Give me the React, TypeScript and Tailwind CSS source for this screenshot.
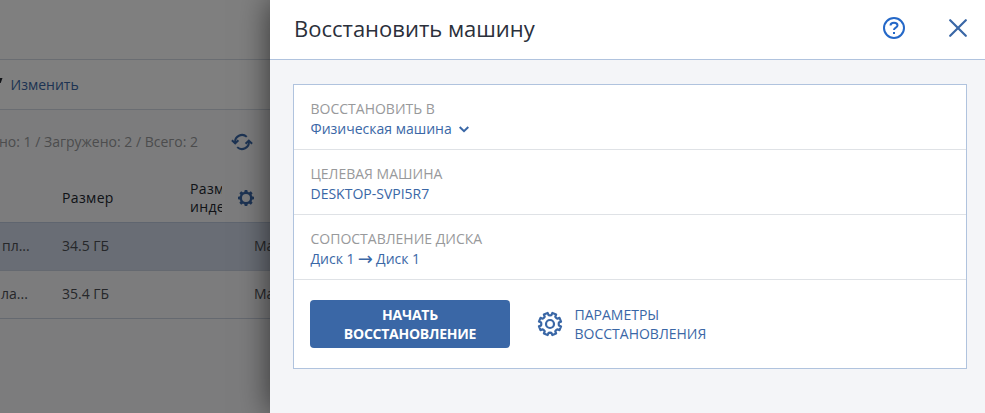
import type { ReactNode } from "react";

const rows = [
  { name: "пл...", size: "34.5 ГБ", type: "Ма", selected: true },
  { name: "ла...", size: "35.4 ГБ", type: "Ма", selected: false },
];

function gearPath(cx: number, cy: number, teeth: number, inner: number, outer: number, base = 0.27, tip = 0.19) {
  const step = (Math.PI * 2) / teeth;
  const at = (r: number, a: number) =>
    `${(cx + r * Math.sin(a)).toFixed(2)} ${(cy - r * Math.cos(a)).toFixed(2)}`;
  const points: string[] = [];
  for (let i = 0; i < teeth; i++) {
    const a = i * step;
    points.push(
      at(inner, a - step * base),
      at(outer, a - step * tip),
      at(outer, a + step * tip),
      at(inner, a + step * base),
      at(inner - 0.3, a + step * 0.5)
    );
  }
  return `M${points.join("L")}Z`;
}

function RefreshIcon() {
  return (
    <svg width="22" height="18" viewBox="0 0 22 18" fill="none" stroke="currentColor" strokeWidth="2" className="shrink-0">
      <path d="M4.2 9.8A6.9 6.9 0 0 1 15.8 3.9" />
      <path d="M17.8 8.2A6.9 6.9 0 0 1 6.2 14.1" />
      <path d="M.9 7.2l3.3 3.2L7.4 7.2" />
      <path d="M14.6 10.8L17.8 7.6l3.3 3.2" />
    </svg>
  );
}

function TableGearIcon() {
  return (
    <svg width="16" height="16" viewBox="0 0 16 16" fill="currentColor" fillRule="evenodd" className="shrink-0">
      <path d={`${gearPath(8, 8, 8, 6.6, 8.2, 0.3, 0.2)}M8 4a4 4 0 1 0 0 8a4 4 0 0 0 0-8Z`} />
    </svg>
  );
}

function OptionsGearIcon() {
  return (
    <svg width="26" height="26" viewBox="0 0 26 26" fill="none" stroke="currentColor" strokeWidth="2.2" strokeLinejoin="round" className="shrink-0">
      <path transform="rotate(22.5 13 13)" d={gearPath(13, 13, 8, 9, 11.3, 0.3, 0.23)} />
      <circle cx="13" cy="13" r="4" />
    </svg>
  );
}

function Section({ label, children }: { label: string; children: ReactNode }) {
  return (
    <div className="h-[65px] border-b border-[#dfe2e6] pt-[14px] pl-[16.5px] text-sm leading-5">
      <div className="text-[#98999b]">{label}</div>
      <button className="flex h-5 items-center whitespace-pre text-[#3a67a6]">{children}</button>
    </div>
  );
}

function BackupList() {
  return (
    <div className="relative h-full w-[270px] shrink-0 overflow-hidden bg-[#f8f9fb] text-sm whitespace-nowrap">
      <div className="h-[60px] border-b border-[#d5dbe5] bg-white" />
      <div className="flex h-[50px] items-center border-b border-[#d5dbe5] bg-white text-[#3a67a6]">
        <span className="w-[10.5px] text-[#22262f]">
          <svg width="3" height="8" viewBox="0 0 3 8" fill="currentColor" className="-mt-1.5">
            <path d="M0 0h2.500L.700 5H0V1.500Z" />
          </svg>
        </span>
        <span>Изменить</span>
      </div>
      <div className="flex h-16 items-center justify-between pr-[17px]">
        <span className="-ml-px text-[#98999b]">но: 1 / Загружено: 2 / Всего: 2</span>
        <span className="text-[#3a67a6]"><RefreshIcon /></span>
      </div>
      <div className="flex h-[49px] items-center border-b border-[#bfcade] font-medium tracking-[0.35px] text-[#22262f]">
        <span className="w-[62px] shrink-0" />
        <span className="w-32 shrink-0">Размер</span>
        <span className="w-8 shrink-0 overflow-hidden leading-[18px]">Размер<br />индекса</span>
        <span className="ml-4 text-[#3a67a6]"><TableGearIcon /></span>
      </div>
      {rows.map((row) => (
        <div
          key={row.size}
          className={`flex h-12 items-center border-b border-[#cbd3e0] pb-0.5 text-[#4d4f54] ${row.selected ? "bg-[#d2dbea]" : ""}`}
        >
          <span className={`w-[62px] shrink-0 ${row.selected ? "pl-0.5" : "pl-px"}`}>{row.name}</span>
          <span className="w-48 shrink-0">{row.size}</span>
          <span>{row.type}</span>
        </div>
      ))}
      <div className="absolute inset-0 bg-black/50" />
    </div>
  );
}

function RecoverPanel() {
  return (
    <div className="relative flex h-full flex-1 flex-col bg-[#f4f5f8] shadow-[0_0_30px_rgba(0,0,0,0.6)]">
      <header className="flex h-[60px] items-center border-b border-[#b0c3de] bg-white pr-[18px] pb-[3px] pl-6">
        <h1 className="flex-1 text-[22px] text-[#2b303b]">Восстановить машину</h1>
        <button className="mr-[43px] text-[#2468c8]">
          <svg width="24" height="24" viewBox="0 0 24 24" fill="none" stroke="currentColor" strokeWidth="2">
            <circle cx="12" cy="12" r="10" />
            <path d="M8.5 9.5C8.5 7.7 10 6.8 12 6.8s3.5.9 3.5 2.7c0 2.3-3.500 2.1-3.500 4.600" />
            <path d="M12 16v2" />
          </svg>
        </button>
        <button className="text-[#3a67a6]">
          <svg width="18" height="18" viewBox="0 0 18 18" fill="none" stroke="currentColor" strokeWidth="2.2" strokeLinecap="round">
            <path d="M1.2 1.2l15.600 15.600M16.800 1.200L1.200 16.800" />
          </svg>
        </button>
      </header>
      <div className="mt-6 mr-[18px] ml-[23px] h-[285px] border border-[#b0c3de] bg-white">
        <Section label="ВОССТАНОВИТЬ В">
          Физическая машина
          <svg width="10" height="7" viewBox="0 0 10 7" fill="none" stroke="currentColor" strokeWidth="2" className="ml-[7px]">
            <path d="M.7 1L5 5.2 9.3 1" />
          </svg>
        </Section>
        <Section label="ЦЕЛЕВАЯ МАШИНА">DESKTOP-SVPI5R7</Section>
        <Section label="СОПОСТАВЛЕНИЕ ДИСКА">
          <span>Диск 1</span>
          <span className="w-[21.5px] text-center font-['DejaVu_Sans',sans-serif] text-[18px]">→</span>
          <span>Диск 1</span>
        </Section>
        <div className="flex items-center pt-5 pl-4 text-sm leading-[19px]">
          <button className="h-12 w-[200px] rounded bg-[#3a67a6] font-bold tracking-[-0.25px] text-white">
            НАЧАТЬ<br />ВОССТАНОВЛЕНИЕ
          </button>
          <button className="ml-[27px] flex items-center text-left text-[#3a67a6]">
            <OptionsGearIcon />
            <span className="ml-[11.5px]">ПАРАМЕТРЫ<br />ВОССТАНОВЛЕНИЯ</span>
          </button>
        </div>
      </div>
    </div>
  );
}

export default function App() {
  return (
    <div className="flex h-[413px] w-[985px] overflow-hidden font-['Open_Sans',sans-serif]">
      <BackupList />
      <RecoverPanel />
    </div>
  );
}
